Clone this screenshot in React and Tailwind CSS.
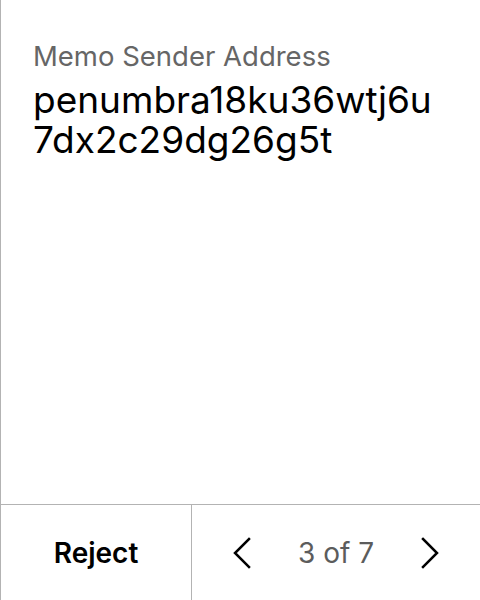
const Chevron = ({ dir }) => (
  <svg width="20" height="32" viewBox="0 0 20 32" fill="none" stroke="#000" strokeWidth="2.5" strokeLinecap="square">
    {dir === 'left' ? <polyline points="17,2 3,16 17,30" /> : <polyline points="3,2 17,16 3,30" />}
  </svg>
);

export default function App() {
  return (
    <div className="w-[480px] h-[600px] bg-white border-l border-[#b3b3b3] flex flex-col font-['Inter',sans-serif]">
      <div className="flex-1 px-8 pt-[38px]">
        <p className="text-[27.5px] leading-9 text-[#666666]">Memo Sender Address</p>
        <p className="mt-[6px] text-[37px] leading-10 text-black break-all">penumbra18ku36wtj6u7dx2c29dg26g5t</p>
      </div>
      <div className="h-[96px] border-t border-[#b3b3b3] flex">
        <button className="w-[191px] border-r border-[#b3b3b3] flex items-center justify-center text-[28px] font-semibold text-black">
          Reject
        </button>
        <div className="flex-1 flex items-center justify-center gap-[46px]">
          <Chevron dir="left" />
          <span className="text-[28px] text-[#5c5c5c]">3 of 7</span>
          <Chevron dir="right" />
        </div>
      </div>
    </div>
  );
}
